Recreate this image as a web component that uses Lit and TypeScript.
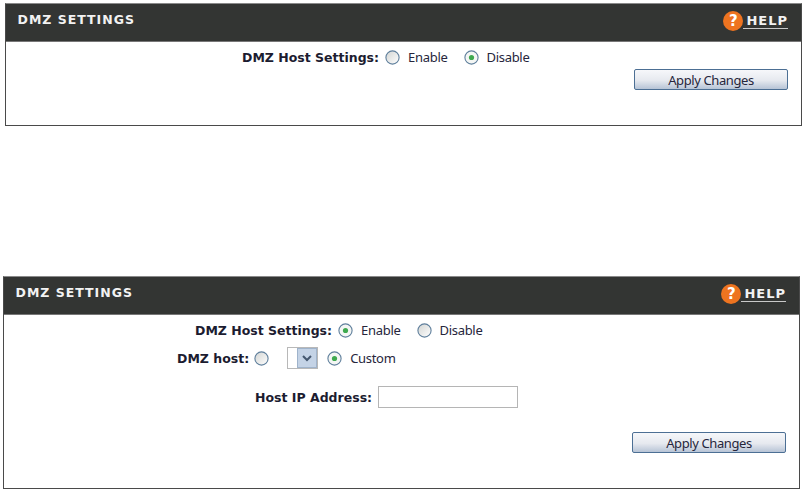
import { LitElement, html, svg, css } from "lit";
import { customElement } from "lit/decorators.js";

@customElement("dmz-radio")
class DmzRadio extends LitElement {
  static properties = { checked: { type: Boolean } };
  declare checked: boolean;

  constructor() {
    super();
    this.checked = false;
  }

  static styles = css`
    :host {
      display: block;
      width: 15px;
      height: 15px;
      flex: none;
    }
    svg {
      display: block;
    }
  `;

  render() {
    return html`<svg width="15" height="15" viewBox="0 0 15 15">
      <defs>
        <linearGradient id="fill" x1="0" y1="0" x2="1" y2="1">
          <stop offset="0" stop-color="#d2d4d2"></stop>
          <stop offset="1" stop-color="#ffffff"></stop>
        </linearGradient>
      </defs>
      <circle
        cx="7.5"
        cy="7.5"
        r="6.6"
        fill=${this.checked ? "#f4f6f4" : "url(#fill)"}
        stroke="#5f7f9c"
        stroke-width="1.1"
      ></circle>
      ${this.checked
        ? svg`<circle cx="7.5" cy="7.5" r="2.6" fill="#3fa94f"></circle>`
        : ""}
    </svg>`;
  }
}

@customElement("dmz-panel")
class DmzPanel extends LitElement {
  static styles = css`
    :host {
      display: block;
      border: 1px solid #4a4a4a;
      border-top-color: #8a8a8a;
      background: #fff;
      box-sizing: border-box;
    }
    .head {
      height: 38px;
      background: #333533;
      border-bottom: 1px solid #777;
      display: flex;
      justify-content: space-between;
      padding: 6px 13px 0 11.5px;
      box-sizing: border-box;
      color: #f2f2f2;
      font-family: "DejaVu Sans", sans-serif;
      font-weight: bold;
    }
    .title {
      font-size: 12.5px;
      letter-spacing: 1px;
      line-height: 19px;
    }
    .help {
      display: flex;
      align-items: center;
      height: 22px;
      font-size: 13px;
      letter-spacing: 1px;
    }
    .mark {
      width: 20px;
      height: 20px;
      border-radius: 50%;
      background: #ee7420;
      color: #fff;
      font-size: 15px;
      line-height: 20px;
      text-align: center;
      letter-spacing: 0;
    }
    .word {
      border-bottom: 1px solid #c8c8c8;
      line-height: 14px;
      padding-left: 3px;
    }
  `;

  render() {
    return html`<div class="head">
        <div class="title">DMZ SETTINGS</div>
        <div class="help"><span class="mark">?</span><span class="word">HELP</span></div>
      </div>
      <slot></slot>`;
  }
}

@customElement("app-root")
class AppRoot extends LitElement {
  static styles = css`
    :host {
      display: block;
      width: 807px;
      height: 494px;
      background: #fff;
      overflow: hidden;
      font-family: "Noto Sans", sans-serif;
      font-size: 13px;
      letter-spacing: -0.3px;
      color: #26263c;
    }
    .page {
      display: flex;
      flex-direction: column;
      padding-top: 3px;
    }
    .first {
      width: 797px;
      height: 123px;
      margin-left: 5px;
      margin-bottom: 150px;
    }
    .second {
      width: 797px;
      height: 213px;
      margin-left: 3px;
    }
    .row {
      display: flex;
      align-items: center;
      height: 20px;
    }
    b {
      color: #1c1c30;
      font-family: "DejaVu Sans", sans-serif;
      font-size: 12.5px;
      letter-spacing: 0;
      margin-right: 6px;
    }
    .opt {
      margin-left: 8px;
      margin-right: 16px;
    }
    .r1 {
      padding-left: 236px;
      margin-top: 5px;
    }
    .r2 {
      padding-left: 191px;
      margin-top: 5px;
    }
    .r3 {
      padding-left: 173px;
      margin-top: 7px;
      height: 22px;
    }
    .r3 b {
      margin-right: 5px;
    }
    .r4 {
      padding-left: 251px;
      margin-top: 17px;
      height: 22px;
    }
    .actions {
      display: flex;
      justify-content: flex-end;
      padding-right: 13px;
    }
    .first .actions {
      margin-top: 2px;
    }
    .second .actions {
      margin-top: 24px;
    }
    button {
      width: 154px;
      height: 21px;
      padding: 0;
      border: 1px solid #4c6f94;
      border-radius: 2px;
      background: linear-gradient(#f6f7fa, #e6e9ef 55%, #b7c4d6);
      color: #26263c;
      font: 13px "Noto Sans", sans-serif;
      letter-spacing: -0.4px;
    }
    .pick {
      display: flex;
      width: 31px;
      height: 22px;
      box-sizing: border-box;
      border: 1px solid #b8b8b8;
      margin-left: 18px;
      margin-right: 9px;
      justify-content: flex-end;
    }
    .pick svg {
      display: block;
    }
    input {
      width: 140px;
      height: 22px;
      box-sizing: border-box;
      border: 1px solid #b5b5b5;
      margin: 0;
      padding: 0;
      background: #fff;
    }
  `;

  render() {
    return html`<div class="page">
      <dmz-panel class="first">
        <div class="row r1">
          <b>DMZ Host Settings:</b>
          <dmz-radio></dmz-radio><span class="opt">Enable</span>
          <dmz-radio checked></dmz-radio><span class="opt">Disable</span>
        </div>
        <div class="actions"><button>Apply Changes</button></div>
      </dmz-panel>
      <dmz-panel class="second">
        <div class="row r2">
          <b>DMZ Host Settings:</b>
          <dmz-radio checked></dmz-radio><span class="opt">Enable</span>
          <dmz-radio></dmz-radio><span class="opt">Disable</span>
        </div>
        <div class="row r3">
          <b>DMZ host:</b>
          <dmz-radio></dmz-radio>
          <span class="pick">
            <svg width="20" height="20" viewBox="0 0 20 20">
              <rect x="0.5" y="0.5" width="19" height="19" fill="#c4d3e6" stroke="#9fb3cb"></rect>
              <path d="M6 8l4 4 4-4" fill="none" stroke="#44576f" stroke-width="2"></path>
            </svg>
          </span>
          <dmz-radio checked></dmz-radio><span class="opt">Custom</span>
        </div>
        <div class="row r4">
          <b>Host IP Address:</b>
          <input type="text" />
        </div>
        <div class="actions"><button>Apply Changes</button></div>
      </dmz-panel>
    </div>`;
  }
}
